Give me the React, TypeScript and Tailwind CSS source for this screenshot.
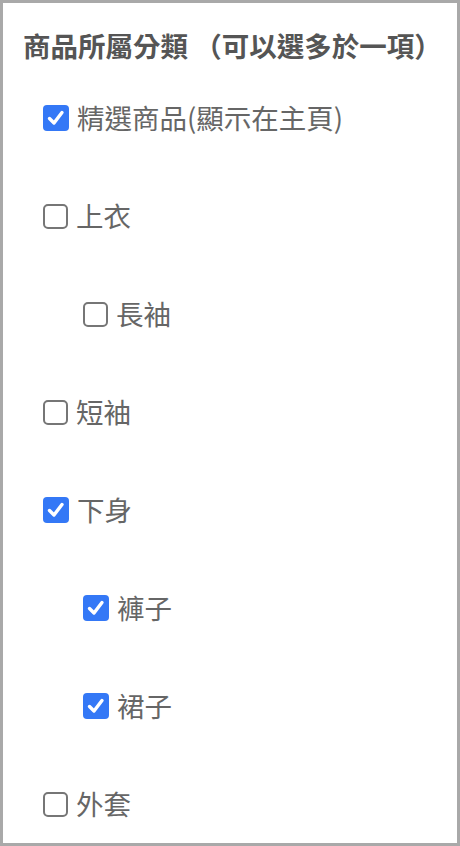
import React from "react";

type Item = { label: string; checked: boolean; indent?: boolean };

const items: Item[] = [
  { label: "精選商品(顯示在主頁)", checked: true },
  { label: "上衣", checked: false },
  { label: "長袖", checked: false, indent: true },
  { label: "短袖", checked: false },
  { label: "下身", checked: true },
  { label: "褲子", checked: true, indent: true },
  { label: "裙子", checked: true, indent: true },
  { label: "外套", checked: false },
];

function Box({ checked }: { checked: boolean }) {
  if (checked) {
    return (
      <span className="flex h-[26px] w-[26px] shrink-0 items-center justify-center rounded-[4px] bg-[#3478f6]">
        <svg width="20" height="20" viewBox="0 0 20 20" fill="none">
          <path d="M3.5 10.5 L8 15 L16 4.5" stroke="white" strokeWidth="3.4" strokeLinecap="round" strokeLinejoin="round" />
        </svg>
      </span>
    );
  }
  return <span className="block h-[25px] w-[25px] shrink-0 rounded-[5px] border-2 border-[#767676] bg-white" />;
}

export default function App() {
  return (
    <div
      className="box-border h-[846px] w-[460px] border-[3px] border-[#a9a9a9] bg-white"
      style={{ fontFamily: '"Noto Sans CJK TC", "Noto Sans", sans-serif' }}
    >
      <div className="pl-5 pt-[22px]">
        <h2 className="whitespace-nowrap text-[27.5px] font-bold leading-[40px] text-[#555555]">
          商品所屬分類 （可以選多於一項）
        </h2>
      </div>
      <div className="mt-[4px] flex flex-col pl-[40px]">
        {items.map((it) => (
          <label
            key={it.label}
            className={`flex h-[98px] items-center gap-2 ${it.indent ? "pl-10" : ""}`}
          >
            <Box checked={it.checked} />
            <span className="text-[27.5px] leading-none text-[#666666]">{it.label}</span>
          </label>
        ))}
      </div>
    </div>
  );
}
